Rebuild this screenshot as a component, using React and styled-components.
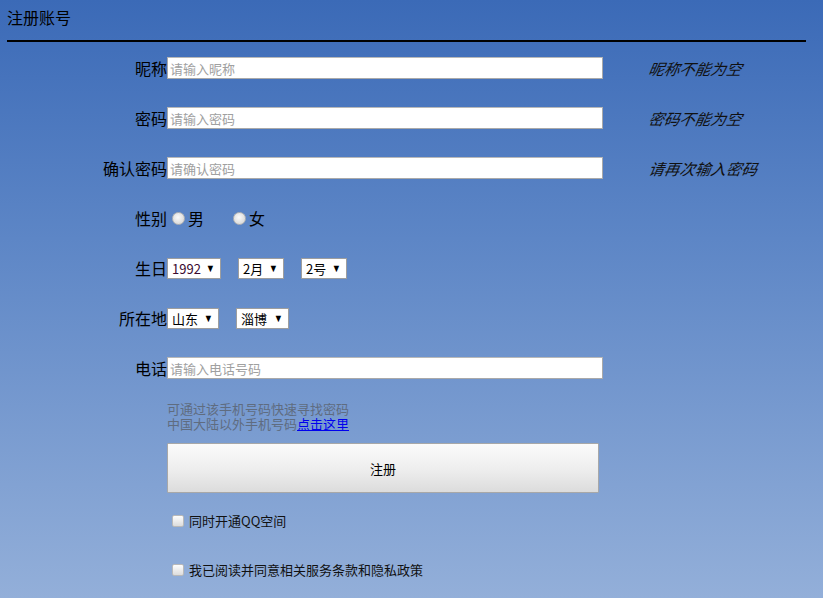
import React from 'react';
import styled, { createGlobalStyle } from 'styled-components';

const GlobalStyle = createGlobalStyle`
  html, body {
    margin: 0;
    padding: 0;
    height: 100%;
  }
  body {
    background: linear-gradient(180deg, #3b6ab7 0%, #5d86c6 40%, #93afd9 100%);
    background-attachment: fixed;
    font-family: "Liberation Sans", "Noto Sans CJK SC", sans-serif;
    color: #000;
    min-height: 598px;
  }
`;

const Page = styled.div`
  padding: 0 17px 0 7px;
`;

const Title = styled.div`
  font-family: "Noto Sans CJK SC", sans-serif;
  font-size: 16px;
  line-height: 34px;
  padding-bottom: 6px;
  border-bottom: 2px solid #000;
`;

const Form = styled.div`
  display: flex;
  flex-direction: column;
  padding-top: 15px;
`;

const Row = styled.div`
  display: flex;
  align-items: center;
  height: 22px;
  margin-bottom: ${p => (p.$last ? 0 : 28)}px;
`;

const Label = styled.label`
  width: 160px;
  text-align: right;
  font-family: "Noto Sans CJK SC", sans-serif;
  font-size: 16px;
  line-height: 22px;
  flex-shrink: 0;
`;

const TextInput = styled.input`
  box-sizing: border-box;
  width: 436px;
  height: 22px;
  margin: 0;
  padding: 0 2px;
  border: 1px solid #a9a9a9;
  border-top-color: #b8b8b8;
  background: #fff;
  font-family: "Noto Sans CJK SC", sans-serif;
  font-size: 13px;
  outline: none;
  &::placeholder {
    color: #a0a0a0;
  }
`;

const Hint = styled.span`
  margin-left: 46px;
  font-family: "Noto Sans CJK SC", sans-serif;
  font-style: italic;
  font-size: 15.5px;
  color: #111;
  transform: skewX(-10deg);
  display: inline-block;
`;

const Option = styled.label`
  display: flex;
  align-items: center;
  font-family: "Noto Sans CJK SC", sans-serif;
  font-size: 16px;
  margin-right: ${p => p.$gap || 0}px;
`;

const Radio = styled.input.attrs({ type: 'radio' })`
  appearance: none;
  width: 13px;
  height: 13px;
  margin: 0 3px 0 5px;
  border-radius: 50%;
  border: 1px solid #b4b4b4;
  background: radial-gradient(circle at 45% 40%, #fafafa 0%, #dcdcdc 70%, #c4c4c4 100%);
`;

const SelectWrap = styled.div`
  position: relative;
  margin-right: ${p => p.$gap || 0}px;
  &::after {
    content: '▼';
    position: absolute;
    right: 5px;
    top: 50%;
    transform: translateY(-50%) scaleX(0.85);
    font-size: 11px;
    pointer-events: none;
    color: #000;
  }
`;

const Select = styled.select`
  appearance: none;
  box-sizing: border-box;
  width: ${p => p.$w}px;
  height: 21px;
  margin: 0;
  padding: 0 0 0 4px;
  border: 1px solid #9e9e9e;
  background: #fff;
  font-family: "Noto Sans CJK SC", sans-serif;
  font-size: 13px;
  color: ${p => p.$color || '#000'};
  outline: none;
`;

const Note = styled.div`
  margin: 22px 0 0 160px;
  font-family: "Noto Sans CJK SC", sans-serif;
  font-size: 13px;
  color: #5f6c80;
`;

const NoteLine = styled.div`
  height: 15px;
  line-height: 15px;
`;

const Link = styled.a`
  color: #0000ee;
  text-decoration: underline;
`;

const SubmitButton = styled.button`
  box-sizing: border-box;
  width: 432px;
  height: 50px;
  margin: 12px 0 0 160px;
  border: 1px solid #a8a8a8;
  border-radius: 1px;
  background: linear-gradient(180deg, #fbfbfb 0%, #ededed 55%, #dcdcdc 100%);
  font-family: "Noto Sans CJK SC", sans-serif;
  font-size: 13px;
  color: #000;
`;

const CheckRow = styled.label`
  display: flex;
  align-items: center;
  margin: ${p => p.$top}px 0 0 165px;
  font-family: "Noto Sans CJK SC", sans-serif;
  font-size: 13px;
  color: #111;
`;

const Checkbox = styled.input.attrs({ type: 'checkbox' })`
  appearance: none;
  width: 12px;
  height: 12px;
  margin: 0 5px 0 0;
  border: 1px solid #b9b9b9;
  border-radius: 2px;
  background: linear-gradient(180deg, #fdfdfd 0%, #dcdcdc 100%);
`;

const fields = [
  { label: '昵称', placeholder: '请输入昵称', hint: '昵称不能为空' },
  { label: '密码', placeholder: '请输入密码', hint: '密码不能为空', type: 'password' },
  { label: '确认密码', placeholder: '请确认密码', hint: '请再次输入密码', type: 'password' },
];

export default function App() {
  return (
    <Page>
      <GlobalStyle />
      <Title>注册账号</Title>
      <Form>
        {fields.map(f => (
          <Row key={f.label}>
            <Label>{f.label}</Label>
            <TextInput type={f.type || 'text'} placeholder={f.placeholder} />
            <Hint>{f.hint}</Hint>
          </Row>
        ))}

        <Row>
          <Label>性别</Label>
          <Option $gap={24}><Radio name="sex" />男</Option>
          <Option><Radio name="sex" />女</Option>
        </Row>

        <Row>
          <Label>生日</Label>
          <SelectWrap $gap={17}>
            <Select $w={54} $color="#3a0a30" defaultValue="1992">
              <option>1992</option>
            </Select>
          </SelectWrap>
          <SelectWrap $gap={17}>
            <Select $w={46} defaultValue="2月">
              <option>2月</option>
            </Select>
          </SelectWrap>
          <SelectWrap>
            <Select $w={46} defaultValue="2号">
              <option>2号</option>
            </Select>
          </SelectWrap>
        </Row>

        <Row>
          <Label>所在地</Label>
          <SelectWrap $gap={17}>
            <Select $w={52} defaultValue="山东">
              <option>山东</option>
            </Select>
          </SelectWrap>
          <SelectWrap>
            <Select $w={53} defaultValue="淄博">
              <option>淄博</option>
            </Select>
          </SelectWrap>
        </Row>

        <Row $last>
          <Label>电话</Label>
          <TextInput type="tel" placeholder="请输入电话号码" />
        </Row>

        <Note>
          <NoteLine>可通过该手机号码快速寻找密码</NoteLine>
          <NoteLine>中国大陆以外手机号码<Link href="#">点击这里</Link></NoteLine>
        </Note>

        <SubmitButton>注册</SubmitButton>

        <CheckRow $top={18}><Checkbox />同时开通QQ空间</CheckRow>
        <CheckRow $top={30}><Checkbox />我已阅读并同意相关服务条款和隐私政策</CheckRow>
      </Form>
    </Page>
  );
}
